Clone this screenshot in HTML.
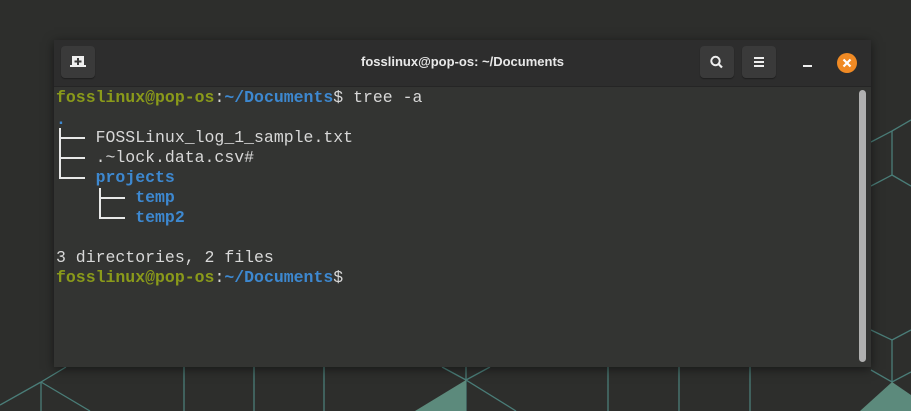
<!DOCTYPE html>
<html><head><style>
html,body{margin:0;padding:0;width:911px;height:411px;overflow:hidden;background:#2d2e2c;}
.win{position:absolute;left:54px;top:40px;width:817px;height:327px;background:#333432;box-shadow:0 2px 10px rgba(0,0,0,.5);}
.tb{position:absolute;left:0;top:0;width:817px;height:46px;background:#2d2d2d;border-bottom:1px solid #252525;}
.btn{position:absolute;top:6px;width:34px;height:32px;background:#3a3a3a;border-radius:4px;box-shadow:0 1px 1px #1e1e1e;}
.title{position:absolute;left:0;width:817px;top:14px;text-align:center;font:bold 13px "Liberation Sans",sans-serif;color:#e8e8e8;}
.term{position:absolute;left:2px;top:48px;font:16.5px/20px "Liberation Mono",monospace;color:#d8d8d8;white-space:pre;}
.g{color:#8a9a1a;font-weight:bold}.b{color:#3d88d0;font-weight:bold}
.sb{position:absolute;left:805px;top:50px;width:7px;height:272px;background:#b0b0b0;border-radius:4px;}
.l{position:absolute;background:#e8e8e8;}
</style></head><body>
<svg width="911" height="411" style="position:absolute;left:0;top:0">
<g stroke="#4a7d78" stroke-width="1.3" fill="none">
<line x1="184" y1="367" x2="184" y2="411"/><line x1="254" y1="367" x2="254" y2="411"/><line x1="324" y1="367" x2="324" y2="411"/>
<line x1="608" y1="367" x2="608" y2="411"/><line x1="679" y1="367" x2="679" y2="411"/><line x1="750" y1="367" x2="750" y2="411"/>
<line x1="442" y1="367" x2="466" y2="380"/><line x1="490" y1="367" x2="466" y2="380"/><line x1="466" y1="380" x2="516" y2="411"/><line x1="466" y1="367" x2="466" y2="411"/>
<line x1="66" y1="367" x2="41" y2="382"/><line x1="41" y1="382" x2="0" y2="405"/><line x1="41" y1="382" x2="90" y2="411"/><line x1="41" y1="382" x2="41" y2="411"/>
<line x1="871" y1="142" x2="892" y2="131"/><line x1="892" y1="131" x2="911" y2="120"/><line x1="892" y1="131" x2="892" y2="175"/><line x1="892" y1="175" x2="871" y2="186"/><line x1="892" y1="175" x2="911" y2="186"/>
<line x1="871" y1="330" x2="892" y2="340"/><line x1="892" y1="340" x2="911" y2="330"/><line x1="892" y1="340" x2="892" y2="382"/><line x1="871" y1="370" x2="892" y2="382"/><line x1="892" y1="382" x2="911" y2="372"/>
</g>
<polygon points="466,380 466,411 415,411" fill="#5c8a7c"/>
<polygon points="892,382 911,395 911,411 860,411" fill="#5c8a7c"/>
</svg>
<div class="win">
<div class="tb">
<div class="btn" style="left:7px"><svg width="34" height="32"><rect x="11" y="10" width="12" height="11" fill="#eee"/><rect x="9" y="19" width="16" height="2" fill="#eee"/><path d="M17 12v7M13.5 15.5h7" stroke="#3a3a3a" stroke-width="2"/></svg></div>
<div class="title">fosslinux@pop-os: ~/Documents</div>
<div class="btn" style="left:646px"><svg width="34" height="32"><circle cx="15.5" cy="15" r="4.2" stroke="#eee" stroke-width="2" fill="none"/><line x1="18.5" y1="18" x2="22" y2="21.5" stroke="#eee" stroke-width="2.2"/></svg></div>
<div class="btn" style="left:688px"><svg width="34" height="32"><path d="M12 12h10M12 16h10M12 20h10" stroke="#eee" stroke-width="2"/></svg></div>
<div style="position:absolute;left:749px;top:25px;width:9px;height:2px;background:#eee"></div>
<div style="position:absolute;left:783px;top:13px;width:20px;height:20px;border-radius:50%;background:#f08a24"><svg width="20" height="20"><path d="M6.5 6.5l7 7M13.5 6.5l-7 7" stroke="#fff" stroke-width="2.2"/></svg></div>
</div>
<div class="term"><span class="g">fosslinux@pop-os</span>:<span class="b">~/Documents</span>$ tree -a
<span class="b" style="position:relative;top:2px">.</span>
    FOSSLinux_log_1_sample.txt
    .~lock.data.csv#
    <span class="b">projects</span>
        <span class="b">temp</span>
        <span class="b">temp2</span>

3 directories, 2 files
<span class="g">fosslinux@pop-os</span>:<span class="b">~/Documents</span>$</div>
<div class="l" style="left:5px;top:88px;width:2px;height:50px"></div>
<div class="l" style="left:5px;top:97px;width:26px;height:2px"></div>
<div class="l" style="left:5px;top:117px;width:26px;height:2px"></div>
<div class="l" style="left:5px;top:137px;width:26px;height:2px"></div>
<div class="l" style="left:45px;top:148px;width:2px;height:30px"></div>
<div class="l" style="left:45px;top:157px;width:26px;height:2px"></div>
<div class="l" style="left:45px;top:177px;width:26px;height:2px"></div>
<div class="sb"></div>
</div>
</body></html>
